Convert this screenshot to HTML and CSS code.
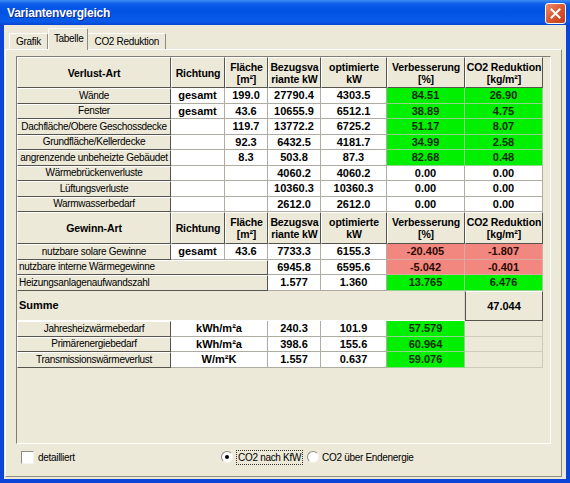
FILE: index.html
```html
<!DOCTYPE html>
<html lang="de">
<head>
    <meta charset="UTF-8">
    <title>Variantenvergleich</title>
    <link rel="stylesheet" href="styles.css">
</head>
<body>
    <div class="window">
        <div class="titlebar">
            <span class="title">Variantenvergleich</span>
            <span class="close">
                <svg width="11" height="11" viewBox="0 0 11 11"><path d="M1.5 1.5 L9.5 9.5 M9.5 1.5 L1.5 9.5" stroke="#fff" stroke-width="2" stroke-linecap="square"/></svg>
            </span>
        </div>
        <div class="client">
            <div class="tabs">
                <span class="tab">Grafik</span>
                <span class="tab active">Tabelle</span>
                <span class="tab">CO2 Reduktion</span>
            </div>
            <div class="panel">
                <div class="grid">
                    <table>
                        <colgroup>
                            <col style="width:154px">
                            <col style="width:54px">
                            <col style="width:43px">
                            <col style="width:53px">
                            <col style="width:66px">
                            <col style="width:78px">
                            <col style="width:78px">
                        </colgroup>
                        <tr class="head">
                            <th>Verlust-Art</th>
                            <th>Richtung</th>
                            <th>Fläche<br>[m²]</th>
                            <th>Bezugsva<br>riante kW</th>
                            <th>optimierte<br>kW</th>
                            <th>Verbesserung<br>[%]</th>
                            <th>CO2 Reduktion<br>[kg/m²]</th>
                        </tr>
                        <tr>
                            <td class="lbl">Wände</td>
                            <td>gesamt</td><td>199.0</td><td>27790.4</td><td>4303.5</td>
                            <td class="good">84.51</td><td class="good">26.90</td>
                        </tr>
                        <tr>
                            <td class="lbl">Fenster</td>
                            <td>gesamt</td><td>43.6</td><td>10655.9</td><td>6512.1</td>
                            <td class="good">38.89</td><td class="good">4.75</td>
                        </tr>
                        <tr>
                            <td class="lbl">Dachfläche/Obere Geschossdecke</td>
                            <td></td><td>119.7</td><td>13772.2</td><td>6725.2</td>
                            <td class="good">51.17</td><td class="good">8.07</td>
                        </tr>
                        <tr>
                            <td class="lbl">Grundfläche/Kellerdecke</td>
                            <td></td><td>92.3</td><td>6432.5</td><td>4181.7</td>
                            <td class="good">34.99</td><td class="good">2.58</td>
                        </tr>
                        <tr>
                            <td class="lbl">angrenzende unbeheizte Gebäudet</td>
                            <td></td><td>8.3</td><td>503.8</td><td>87.3</td>
                            <td class="good">82.68</td><td class="good">0.48</td>
                        </tr>
                        <tr>
                            <td class="lbl">Wärmebrückenverluste</td>
                            <td></td><td></td><td>4060.2</td><td>4060.2</td>
                            <td>0.00</td><td>0.00</td>
                        </tr>
                        <tr>
                            <td class="lbl">Lüftungsverluste</td>
                            <td></td><td></td><td>10360.3</td><td>10360.3</td>
                            <td>0.00</td><td>0.00</td>
                        </tr>
                        <tr>
                            <td class="lbl">Warmwasserbedarf</td>
                            <td></td><td></td><td>2612.0</td><td>2612.0</td>
                            <td>0.00</td><td>0.00</td>
                        </tr>
                        <tr class="head head2">
                            <th>Gewinn-Art</th>
                            <th>Richtung</th>
                            <th>Fläche<br>[m²]</th>
                            <th>Bezugsva<br>riante kW</th>
                            <th>optimierte<br>kW</th>
                            <th>Verbesserung<br>[%]</th>
                            <th>CO2 Reduktion<br>[kg/m²]</th>
                        </tr>
                        <tr>
                            <td class="lbl">nutzbare solare Gewinne</td>
                            <td>gesamt</td><td>43.6</td><td>7733.3</td><td>6155.3</td>
                            <td class="bad">-20.405</td><td class="bad">-1.807</td>
                        </tr>
                        <tr>
                            <td class="lbl left" colspan="3">nutzbare interne Wärmegewinne</td>
                            <td>6945.8</td><td>6595.6</td>
                            <td class="bad">-5.042</td><td class="bad">-0.401</td>
                        </tr>
                        <tr>
                            <td class="lbl left" colspan="3">Heizungsanlagenaufwandszahl</td>
                            <td>1.577</td><td>1.360</td>
                            <td class="good">13.765</td><td class="good">6.476</td>
                        </tr>
                        <tr class="sum">
                            <td class="sum-label" colspan="6">Summe</td>
                            <td class="total">47.044</td>
                        </tr>
                        <tr>
                            <td class="lbl">Jahresheizwärmebedarf</td>
                            <td colspan="2">kWh/m²a</td><td>240.3</td><td>101.9</td>
                            <td class="good">57.579</td><td class="blank"></td>
                        </tr>
                        <tr>
                            <td class="lbl">Primärenergiebedarf</td>
                            <td colspan="2">kWh/m²a</td><td>398.6</td><td>155.6</td>
                            <td class="good">60.964</td><td class="blank"></td>
                        </tr>
                        <tr>
                            <td class="lbl">Transmissionswärmeverlust</td>
                            <td colspan="2">W/m²K</td><td>1.557</td><td>0.637</td>
                            <td class="good">59.076</td><td class="blank"></td>
                        </tr>
                    </table>
                </div>
                <div class="options">
                    <label class="option check-opt"><span class="checkbox"></span>detailliert</label>
                    <label class="option radio-opt"><span class="radio on"></span><span class="focus">CO2 nach KfW</span></label>
                    <label class="option"><span class="radio"></span>CO2 über Endenergie</label>
                </div>
            </div>
        </div>
    </div>
</body>
</html>
```

FILE: styles.css
```css
body {
    margin: 0;
    font-family: "Liberation Sans", Arial, sans-serif;
    color: #000;
}
.window {
    width: 570px;
    height: 483px;
    background: #0b44d6;
    display: flex;
    flex-direction: column;
}
.titlebar {
    height: 25px;
    flex: none;
    display: flex;
    align-items: center;
    justify-content: space-between;
    padding: 0 4px 0 7px;
    background: linear-gradient(#3f8cf3 0, #0a5ce8 4px, #0052e4 45%, #0a5be9 85%, #0646d4 100%);
}
.title {
    color: #fff;
    font-weight: bold;
    font-size: 12px;
    letter-spacing: -0.2px;
    text-shadow: 1px 1px 0 #0c2a8c;
}
.close {
    width: 19px;
    height: 19px;
    margin-top: 2px;
    border: 1px solid #fff;
    border-radius: 3px;
    background: linear-gradient(135deg, #f08a6c, #d9532c 55%, #c33f1c);
    display: flex;
    align-items: center;
    justify-content: center;
}
.client {
    flex: 1;
    margin: 0 4px 4px;
    background: #ece9d8;
    display: flex;
    flex-direction: column;
}
.tabs {
    height: 24px;
    flex: none;
    display: flex;
    align-items: flex-end;
    padding-left: 5px;
    font-size: 10px;
    letter-spacing: -0.3px;
}
.tab {
    height: 15px;
    padding: 0 6px;
    border-top: 1px solid #fff;
    border-left: 1px solid #fff;
    border-right: 1px solid #8d8b82;
    border-radius: 2px 2px 0 0;
    display: flex;
    align-items: center;
}
.tab.active {
    height: 19px;
    margin: 0 -1px -1px -1px;
    padding: 0 4px 2px 5px;
    background: #ece9d8;
    position: relative;
    z-index: 1;
}
.tab + .tab.active {
    margin-left: 0;
}
.panel {
    flex: 1;
    margin: 0 4px 2px 1px;
    padding: 6px 10px 0 10px;
    border-top: 1px solid #fff;
    border-left: 1px solid #fff;
    border-right: 1px solid #8d8b82;
    border-bottom: 1px solid #8d8b82;
    display: flex;
    flex-direction: column;
}
.grid {
    height: 386px;
    flex: none;
    border-top: 1px solid #7f7d74;
    border-left: 1px solid #7f7d74;
    border-right: 1px solid #fff;
    border-bottom: 1px solid #fff;
}
table {
    border-collapse: separate;
    border-spacing: 0;
    table-layout: fixed;
    width: 526px;
}
tr {
    height: 15.5px;
}
tr.head {
    height: 31px;
}
tr.head2 {
    height: 32px;
}
tr.sum {
    height: 30.5px;
}
td, th {
    padding: 0;
    text-align: center;
    white-space: nowrap;
    overflow: hidden;
    font-size: 11px;
    line-height: 12px;
}
td {
    background: #fff;
    font-weight: bold;
    border-right: 1px solid #aeaca3;
    border-bottom: 1px solid #aeaca3;
}
th, td.lbl {
    background: #ece9d8;
    border-top: 1px solid #fff;
    border-left: 1px solid #fff;
    border-right: 1px solid #55544e;
    border-bottom: 1px solid #55544e;
}
th {
    font-size: 10.5px;
    letter-spacing: -0.1px;
}
td.lbl {
    font-weight: normal;
    font-size: 10px;
    letter-spacing: -0.3px;
}
td.left {
    text-align: left;
    padding-left: 1px;
}
td.good {
    background: #00f000;
    color: #0f2a00;
    border-color: #8fd48a;
}
td.bad {
    background: #f2877f;
    color: #2a0a06;
    border-color: #d8aaa4;
}
td.blank {
    background: #ece9d8;
    border-color: #cfccbf;
}
td.sum-label {
    background: #ece9d8;
    text-align: left;
    padding-left: 2px;
    border-right: 1px solid #d8d5c8;
    border-bottom: 1px solid #fff;
}
td.total {
    background: #ece9d8;
    border-top: 1px solid #fff;
    border-left: 1px solid #55544e;
    border-right: 1px solid #55544e;
    border-bottom: 1px solid #55544e;
}
.options {
    height: 26px;
    flex: none;
    display: flex;
    align-items: center;
    padding-left: 5px;
    font-size: 10px;
    letter-spacing: -0.3px;
}
.option {
    display: flex;
    align-items: center;
}
.check-opt {
    width: 200px;
}
.radio-opt {
    width: 86px;
}
.checkbox {
    width: 11px;
    height: 11px;
    margin-right: 4px;
    background: #fff;
    border-top: 1px solid #8d8b82;
    border-left: 1px solid #8d8b82;
    border-right: 1px solid #f4f3ee;
    border-bottom: 1px solid #f4f3ee;
}
.radio {
    width: 10px;
    height: 10px;
    margin-right: 3px;
    border-radius: 50%;
    background: #fff;
    border: 1px solid;
    border-color: #8d8b82 #f4f3ee #f4f3ee #8d8b82;
    display: flex;
    align-items: center;
    justify-content: center;
}
.radio.on::after {
    content: "";
    width: 4px;
    height: 4px;
    border-radius: 50%;
    background: #000;
}
.focus {
    padding: 1px 1px;
    border: 1px dotted #333;
}
```
